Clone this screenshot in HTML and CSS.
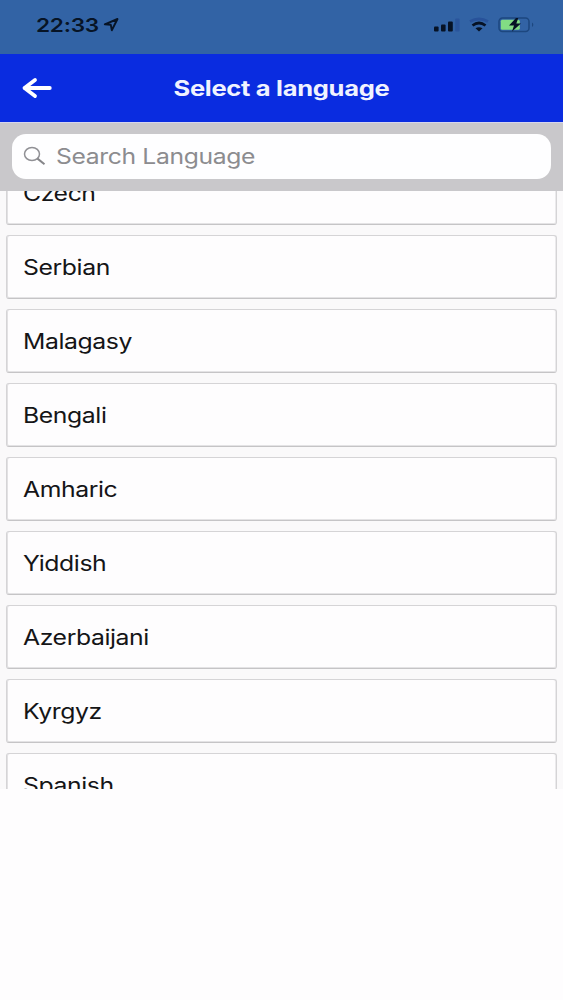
FILE: index.html
```html
<!DOCTYPE html>
<html lang="en">
<head>
<meta charset="utf-8">
<title>Select a language</title>
<link rel="stylesheet" href="styles.css">
</head>
<body>
<div class="status">
  <span class="time">22:33</span>
  <svg class="locate" width="17" height="16" viewBox="0 0 17 16"><path d="M1.800 7.300 14.500 2 8.800 13.200 7.800 7.800Z" fill="none" stroke="#071426" stroke-width="1.900" stroke-linejoin="round"/></svg>
  <svg class="indicators" width="104" height="20" viewBox="0 0 104 20">
    <g fill="#061225"><rect x="4" y="12.500" width="4.600" height="5" rx="1"/><rect x="11" y="10.500" width="4.600" height="7" rx="1"/><rect x="18" y="7.500" width="4.800" height="10" rx="1"/></g>
    <rect x="25.200" y="4.500" width="4.400" height="13" rx="1" fill="#2a559c"/>
    <path d="M40 7.500Q49 2.500 58 7.500" fill="none" stroke="#28529a" stroke-width="2.800"/>
    <path d="M42.500 11.500Q49 6.500 55.500 11.500" fill="none" stroke="#061225" stroke-width="2.800"/>
    <path d="M45.500 14.300Q49 12 52.500 14.300L49 17.500Z" fill="#061225"/>
    <rect x="69" y="4" width="30" height="13.500" rx="3.500" fill="none" stroke="#1d477f" stroke-width="1.500"/>
    <rect x="70.800" y="5.800" width="19" height="10" rx="1.500" fill="#82dc84"/>
    <path d="M86 4 79 11.500H84L82 17.500 91 9.500H86.300L88.300 4Z" fill="#061225"/>
    <path d="M102 8.500q2.600 2 0 4.500Z" fill="#1d477f"/>
  </svg>
</div>
<header class="header">
  <svg class="back" width="32" height="24" viewBox="0 0 32 24"><path d="M28.800 12H3.500M14 4 3.500 12 14 20" fill="none" stroke="#fff" stroke-width="3.800" stroke-linecap="round" stroke-linejoin="round"/></svg>
  <h1 class="title">Select a language</h1>
</header>
<div class="search">
  <div class="field">
    <svg class="glass" width="24" height="20" viewBox="0 0 24 20"><ellipse cx="9" cy="8" rx="7.500" ry="6.600" fill="none" stroke="#909095" stroke-width="1.500"/><path d="m14.500 12.600 7 5.600" stroke="#858589" stroke-width="2"/></svg>
    <span class="placeholder">Search Language</span>
  </div>
</div>
<main class="list">
  <div class="card"><span class="name">Czech</span></div>
  <div class="card"><span class="name">Serbian</span></div>
  <div class="card"><span class="name">Malagasy</span></div>
  <div class="card"><span class="name">Bengali</span></div>
  <div class="card"><span class="name">Amharic</span></div>
  <div class="card"><span class="name">Yiddish</span></div>
  <div class="card"><span class="name">Azerbaijani</span></div>
  <div class="card"><span class="name">Kyrgyz</span></div>
  <div class="card"><span class="name">Spanish</span></div>
</main>
</body>
</html>
```
FILE: styles.css
```css
* { box-sizing: border-box; }
body { margin: 0; height: 1000px; overflow: hidden; background: #fefdfe; font-family: Inter, "Liberation Sans", sans-serif; color: #151517; }
.status { height: 54px; background: #3263a5; display: flex; align-items: flex-start; padding: 0 29px 0 36px; }
.time { width: 67px; margin-top: 13px; padding-top: 1px; font-size: 19px; line-height: 24px; font-weight: 600; letter-spacing: -.2px; color: #071426; white-space: nowrap; transform: scaleX(1.19); transform-origin: left; }
.locate { margin-top: 17px; }
.indicators { margin: 14px 0 0 auto; }
.header { height: 68px; background: #0a2ce0; display: grid; grid-template-columns: 60px 1fr 60px; align-items: center; }
.back { margin-left: 21px; }
.title { margin: 0; padding-top: 1px; text-align: center; font-size: 21px; line-height: 28px; font-weight: 650; letter-spacing: -.25px; color: #f0f3ff; white-space: nowrap; transform: scaleX(1.215); }
.search { height: 69px; background: #c9c8cb; padding: 11px 12px 0; border-top: 1px solid #d5d5ee; }
.field { height: 44.500px; border-radius: 14px; background: #fefeff; display: flex; align-items: center; padding-left: 11px; }
.placeholder { margin-left: 9px; font-size: 21px; letter-spacing: -.3px; color: #8c8c8f; white-space: nowrap; transform: scaleX(1.175); transform-origin: left; }
.list { height: 598px; overflow: hidden; background: #faf9fa; padding: 0 6px; display: flex; flex-direction: column; gap: 10px; }
.card { flex: 0 0 64px; height: 64px; background: #fefdfe; border: 1px solid #d5d4d6; border-bottom-color: #c5c4c6; border-radius: 3px; box-shadow: inset 1px 0 #e2e1e3, inset -1px 0 #ebeaec, inset 0 -1px #e4e3e5; display: flex; align-items: center; padding: 1px 0 0 16px; }
.card:first-child { margin-top: -30px; }
.name { font-size: 21px; line-height: 28px; letter-spacing: -.35px; white-space: nowrap; transform: scaleX(1.18); transform-origin: left; }
```
